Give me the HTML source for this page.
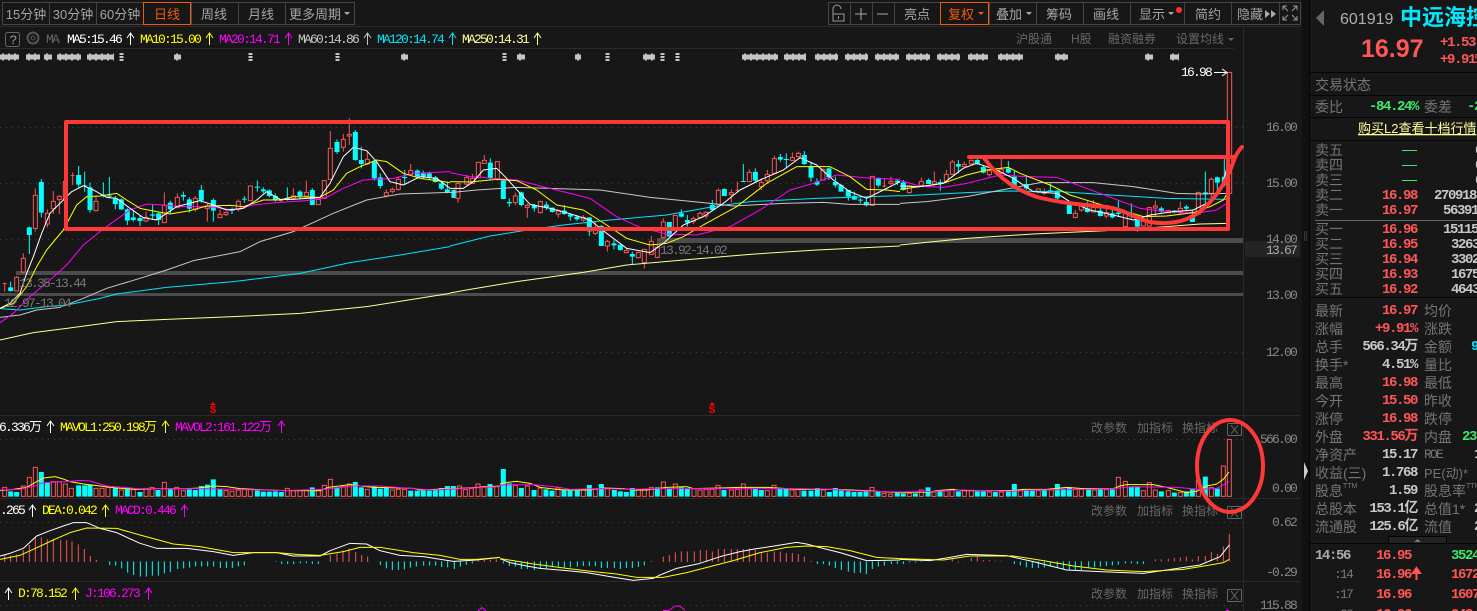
<!DOCTYPE html>
<html><head><meta charset="utf-8"><style>
html,body{margin:0;padding:0;background:#171717;width:1477px;height:611px;overflow:hidden}
svg{display:block}
text{font-family:"Liberation Sans","WenQuanYi Zen Hei","Noto Sans CJK SC",sans-serif}
.m{font-family:"Liberation Mono","WenQuanYi Zen Hei","Noto Sans CJK SC",monospace;font-size:13px;letter-spacing:-1.8px}
.t{font-size:13px;fill:#a5a5a5;text-anchor:middle}
.g{font-size:12px;fill:#686868}
.l{font-size:14px;fill:#757575}
.v{font-family:"Liberation Mono","WenQuanYi Zen Hei","Noto Sans CJK SC",monospace;font-size:14px;font-weight:bold;letter-spacing:-1.4px;text-anchor:end}
.s{font-family:"Liberation Mono","WenQuanYi Zen Hei","Noto Sans CJK SC",monospace;font-size:14px;font-weight:bold;letter-spacing:-1.4px}
.r{fill:#ff5656}.w{fill:#c8c8c8}.n{fill:#3fe86a}
.a{fill:#888;text-anchor:end}
.cy{stroke:#00ffff;fill:none}.rd{stroke:#f85656;fill:#171717;stroke-width:3}
.wk{stroke:#f85656;fill:none;stroke-width:3}
.ln{fill:none;stroke-width:3;stroke-linejoin:round}
</style></head><body>
<svg width="1477" height="611" viewBox="0 0 1477 611" xmlns="http://www.w3.org/2000/svg">
<rect width="1477" height="611" fill="#171717"/>

<!-- toolbar -->
<g fill="none" stroke="#454545" shape-rendering="crispEdges">
<rect x="2.500" y="2.500" width="352" height="22"/>
<path d="M49.500 2V24M96.500 2V24M143.500 2V24M191.500 2V24M238.500 2V24M285.500 2V24"/>
<rect x="828.500" y="2.500" width="472" height="22"/>
<path d="M850.500 2V24M872.500 2V24M894.500 2V24M989.500 2V24M1036.500 2V24M1083.500 2V24M1130.500 2V24M1184.500 2V24M1231.500 2V24M1279.500 2V24"/>
<rect x="143.500" y="2.500" width="47" height="22" stroke="#f25a0c"/>
<rect x="940.500" y="2.500" width="48" height="22" stroke="#f25a0c"/>
</g>
<text class="t" x="26" y="19">15分钟</text><text class="t" x="73" y="19">30分钟</text><text class="t" x="120" y="19">60分钟</text>
<text class="t" x="167" y="19" style="fill:#f25a0c">日线</text><text class="t" x="214" y="19">周线</text><text class="t" x="261" y="19">月线</text><text class="t" x="315" y="19">更多周期</text>
<path d="M344 12h6l-3 3z" fill="#aaa"/>
<path d="M833 14v-5a4 4 0 0 1 8 0M833 14h11v7h-11zM838.500 16v3" fill="none" stroke="#999"/>
<path d="M855 14h12M861 8v12M877 14h11" fill="none" stroke="#aaa"/>
<text class="t" x="917" y="19">亮点</text><text class="t" x="961" y="19" style="fill:#f25a0c">复权</text><path d="M978 12h6l-3 3z" fill="#f25a0c"/>
<text class="t" x="1009" y="19">叠加</text><path d="M1026 12h6l-3 3z" fill="#aaa"/>
<text class="t" x="1059" y="19">筹码</text><text class="t" x="1106" y="19">画线</text>
<text class="t" x="1152" y="19">显示</text><path d="M1168 12h6l-3 3z" fill="#aaa"/><circle cx="1179" cy="10" r="3" fill="#ff3030"/>
<text class="t" x="1208" y="19">简约</text><text class="t" x="1250" y="19">隐藏</text><path d="M1265 10l5 4-5 4zM1271 10l5 4-5 4z" fill="#aaa"/>
<path d="M1297 7l-5 5M1297 11v-4h-4M1283 21v-4M1283 21h4M1283 21l5-5M1297 17v4h-4M1297 21l-5-5M1283 7h4M1283 7v4M1283 7l5 5" fill="none" stroke="#999" transform="translate(0,-1)"/>

<!-- frame lines -->
<g stroke="#2a2a2a" shape-rendering="crispEdges" fill="none">
<path d="M0 26.500H1300M0 48.500H1234M0 415.500H1300M0 498.500H1300M0 581.500H1300"/>
<path d="M1243.500 27V611"/>
</g>
<g stroke="#424242" stroke-dasharray="1 5" shape-rendering="crispEdges" fill="none">
<path d="M0 127.500H1246M0 183.500H1246M0 239.500H1246M0 295.500H1246M0 352.500H1246M0 439.500H1246M0 522.500H1246M0 605.500H1246"/>
</g>

<!-- row 2 -->
<rect x="5.500" y="32.500" width="14" height="14" rx="2" fill="none" stroke="#666"/>
<text class="m" x="9.500" y="44" fill="#999">?</text>
<circle cx="33" cy="38" r="5.500" fill="none" stroke="#555" stroke-width="2"/><circle cx="33" cy="38" r="2" fill="none" stroke="#555"/>
<text class="m" x="46" y="43" fill="#666">MA</text>
<text class="m" x="67" y="43" fill="#fff">MA5:15.46</text>
<text class="m" x="140" y="43" fill="#ffff00">MA10:15.00</text>
<text class="m" x="219" y="43" fill="#ff00ff">MA20:14.71</text>
<text class="m" x="298" y="43" fill="#c8c8c8">MA60:14.86</text>
<text class="m" x="377" y="43" fill="#00e5ff">MA120:14.74</text>
<text class="m" x="462" y="43" fill="#ffff99">MA250:14.31</text>
<g fill="none">
<path d="M130.500 45V33M127 38l3.500-5 3.500 5" stroke="#fff"/>
<path d="M209.500 45V33M206 38l3.500-5 3.500 5" stroke="#ffff00"/>
<path d="M288.500 45V33M285 38l3.500-5 3.500 5" stroke="#ff00ff"/>
<path d="M367.500 45V33M364 38l3.500-5 3.500 5" stroke="#c8c8c8"/>
<path d="M452.500 45V33M449 38l3.500-5 3.500 5" stroke="#00e5ff"/>
<path d="M537.500 45V33M534 38l3.500-5 3.500 5" stroke="#ffff99"/>
</g>
<text class="g" x="1016" y="43">沪股通</text><text class="g" x="1071" y="43">H股</text><text class="g" x="1108" y="43">融资融券</text><text class="g" x="1176" y="43">设置均线</text><path d="M1228 38h6l-3 3z" fill="#666"/>

<!-- markers -->
<path d="M0 57H19M26 57H40M44 57H52M57 57H81M87 57H114M174 57H181M401 57H408M517 57H525M575 57H581M643 57H655M742 57H778M784 57H806M815 57H838M845 57H868M875 57H899M906 57H930M937 57H960M968 57H988M998 57H1023M1055 57H1068M1145 57H1153M1170 57H1179" stroke="#c4c4c4" stroke-width="5" fill="none"/>
<path d="M0 57H19M26 57H40M44 57H52M57 57H81M87 57H114M174 57H181M401 57H408M517 57H525M575 57H581M643 57H655M742 57H778M784 57H806M815 57H838M845 57H868M875 57H899M906 57H930M937 57H960M968 57H988M998 57H1023M1055 57H1068M1145 57H1153M1170 57H1179" stroke="#c4c4c4" stroke-width="7" stroke-dasharray="2 4" stroke-dashoffset="-2" fill="none"/>
<path d="M121.500 53V61M250.500 53V61M337.500 53V61M504.500 53V61M607.500 53V61M662.500 53V61M677.500 53V61" stroke="#c4c4c4" stroke-width="4" stroke-dasharray="2 1" fill="none"/>

<!-- gray range bars -->
<g fill="#4c4c4c" shape-rendering="crispEdges">
<rect x="657" y="238" width="586" height="5"/>
<rect x="16" y="271" width="1227" height="4"/>
<rect x="0" y="293" width="1243" height="3"/>
</g>

<!-- chart section 1 -->
<g transform="translate(0,110) scale(.33333)">
<path class="cy" stroke-width="3" d="M32 515V545M88 350V432M124 207V322M236 168V232M254 185V245M270 218V308M310 217V262M328 201V265M346 258V298M364 265V300M382 295V345M400 300V335M420 318V348M458 285V330M476 305V345M511 272V310M550 245V272M568 262V308M604 225V278M640 265V335M696 292V312M733 258V278M772 212V245M790 232V250M808 238V262M826 250V275M862 232V272M900 240V266M937 235V285M1011 88V132M1066 60V152M1084 110V175M1123 150V212M1141 190V236M1214 180V222M1252 178V205M1270 182V205M1288 185V210M1306 198V218M1324 212V240M1342 215V250"/>
<path class="cy" stroke-width="15" d="M32 532V543M88 352V375M124 216V308M236 195V224M254 226V229M270 232V300M310 254V257M328 257V260M346 266V282M364 268V298M382 298V332M400 322V330M420 324V333M458 313V317M476 310V330M511 278V298M550 255V260M568 268V296M604 240V272M640 270V302M696 300V303M733 266V269M772 230V233M790 238V244M808 241V258M826 258V270M862 264V270M900 245V258M937 240V285M1011 96V126M1066 66V150M1084 150V162M1123 155V205M1141 202V228M1214 201V204M1252 182V200M1270 190V200M1288 190V202M1306 202V216M1324 220V236M1342 238V248"/>
<path class="wk" d="M14 518V545M50 498V545M70 430V490M106 235V365M142 298V352M160 243V312M178 255V312M196 212V300M218 187V225M288 260V305M438 305V336M493 247V338M532 250V295M586 258V305M622 282V335M660 298V323M678 305V318M715 268V305M751 226V272M844 268V276M880 235V270M919 212V258M955 265V285M973 210V265M991 63V210M1030 72V125M1048 25V105M1102 125V165M1159 238V262M1177 232V250M1195 200V242M1232 162V195"/>
<path class="rd" d="M8 521h12M44 502h12v41h-12zM64 445h12v41h-12zM100 256h12v99h-12zM136 310h12v32h-12zM154 274h12v22h-12zM172 259h12v9h-12zM190 214h12v56h-12zM212 197h12M282 274h12v28h-12zM432 322h12v11h-12zM487 286h12v52h-12zM526 262h12v30h-12zM580 265h12v33h-12zM616 288h12v7h-12zM654 313h12v10h-12zM672 307h12v7h-12zM709 274h12v24h-12zM745 228h12v44h-12zM838 272h12M874 258h12v8h-12zM913 247h12v11h-12zM949 268h12v16h-12zM967 212h12v53h-12zM985 115h12v93h-12zM1024 88h12v24h-12zM1042 73h12v5h-12zM1096 148h12v14h-12zM1153 248h12v10h-12zM1171 238h12v6h-12zM1189 208h12v30h-12zM1226 182h12v12h-12z"/>
<g class="ln">
<polyline stroke="#ffff99" points="0,690 100,668 200,655 350,635 500,628 700,620 900,610 1100,590 1350,550"/>
<polyline stroke="#00e5ff" points="0,596 60,600 140,590 200,585 300,565 350,552 500,532 700,515 900,490 1050,458 1200,435 1350,410"/>
<polyline stroke="#c8c8c8" points="0,622 60,615 110,600 180,592 250,565 320,535 420,505 500,480 580,452 720,425 780,395 880,365 1000,310 1100,270 1200,252 1350,247"/>
<polyline stroke="#ff00ff" points="0,638 40,610 90,560 150,510 200,465 250,405 300,365 340,335 390,300 440,282 490,285 550,290 630,290 700,300 760,285 830,278 920,272 980,262 1030,235 1090,210 1180,205 1240,190 1350,185"/>
<polyline stroke="#ffff00" points="0,596 40,580 80,530 110,470 140,420 190,360 230,285 260,260 300,258 350,250 380,270 420,295 470,305 510,312 570,302 620,288 690,286 730,290 790,270 840,270 880,260 960,262 1000,240 1040,190 1080,170 1130,150 1160,155 1210,190 1260,205 1310,212 1350,218"/>
<polyline stroke="#ffffff" points="0,595 30,580 60,550 80,490 100,440 125,370 150,310 185,275 215,245 250,227 280,240 320,262 350,265 390,295 430,323 470,330 500,310 530,290 600,272 640,285 680,300 730,295 770,270 800,245 840,268 880,268 960,262 990,220 1030,140 1060,112 1100,122 1130,155 1170,215 1210,225 1260,200 1310,205 1350,235"/>
</g>
</g>

<!-- chart section 2 -->
<g transform="translate(450,110) scale(.33333)">
<path class="cy" stroke-width="3" d="M12 238V264M121 145V210M160 210V267M178 265V290M214 245V288M253 282V305M289 275V300M307 292V308M343 285V315M361 310V332M381 315V332M418 322V378M454 345V408M492 390V418M511 404V422M547 425V463M658 336V380M694 298V322M712 315V350M787 270V302M823 235V258M880 162V215M916 175V216M991 132V155M1009 130V175M1063 123V165M1083 155V215M1101 205V228M1137 172V210M1156 200V232M1173 222V245M1195 240V272M1213 245V270M1231 265V280M1249 260V290M1285 202V232M1342 208V225"/>
<path class="cy" stroke-width="15" d="M12 240V264M121 158V205M160 212V267M178 276V280M214 247V285M253 285V295M289 284V294M307 293V306M343 302V312M361 313V320M381 320V328M418 322V364M454 348V408M492 400V406M511 404V420M547 432V440M658 336V380M694 310V320M712 330V338M787 285V300M823 237V258M880 213V216M916 186V212M991 141V149M1009 147V150M1063 135V162M1083 168V203M1101 215V224M1137 175V202M1156 216V226M1173 225V245M1195 240V260M1213 258V269M1231 269V272M1249 276V286M1285 204V226M1342 212V218"/>
<path class="wk" d="M24 218V278M50 195V225M68 192V222M85 155V205M103 135V162M142 153V212M196 248V285M232 280V323M271 272V310M325 298V322M400 315V335M436 335V375M472 390V425M529 415V430M565 425V445M583 418V476M604 378V435M622 405V445M640 325V385M676 316V360M730 320V342M750 305V325M768 303V326M805 235V285M844 238V278M862 215V248M898 178V216M934 205V240M952 180V222M973 137V192M1027 127V152M1045 125V143M1119 175V212M1267 198V288M1303 205V232M1323 200V225"/>
<path class="rd" d="M18 220h12V265h-12zM44 203h12V222h-12zM62 205h12V220h-12zM79 157h12V203h-12zM97 151h12V160h-12zM136 155h12V207h-12zM190 258h12V278h-12zM226 286h12V292h-12zM265 275h12V308h-12zM319 303h12V312h-12zM394 322h12V330h-12zM430 360h12V370h-12zM466 394h12V408h-12zM523 421h12V428h-12zM559 428h12V443h-12zM577 418h12V458h-12zM598 394h12V433h-12zM616 412h12V442h-12zM634 336h12V382h-12zM670 316h12V358h-12zM724 326h12V334h-12zM744 310h12V322h-12zM762 307h12V318h-12zM799 241h12V283h-12zM838 248h12V254h-12zM856 241h12M892 187h12V215h-12zM928 218h12V230h-12zM946 193h12V212h-12zM967 146h12V190h-12zM1021 143h12V151h-12zM1039 130h12V140h-12zM1113 178h12V210h-12zM1261 199h12V286h-12zM1297 228h12M1317 214h12V220h-12z"/>
<g class="ln">
<polyline stroke="#ffff99" points="0,549 60,538 200,515 400,487 530,465 700,450 900,433 1100,420 1350,408"/>
<polyline stroke="#00e5ff" points="0,408 120,378 220,362 340,345 480,330 650,315 790,290 900,275 1100,265 1350,257"/>
<polyline stroke="#c8c8c8" points="0,248 80,240 200,232 300,235 450,240 600,262 760,278 850,288 1000,280 1120,277 1200,283 1350,283"/>
<polyline stroke="#ff00ff" points="0,188 60,200 200,210 300,235 420,265 500,320 570,352 650,372 740,375 840,350 930,300 1020,240 1090,220 1160,195 1240,203 1350,208"/>
<polyline stroke="#ffff00" points="0,215 60,216 140,208 200,212 260,240 320,285 400,300 470,345 530,385 600,405 650,400 700,380 760,345 860,290 950,220 1040,170 1140,170 1200,200 1250,238 1310,240 1350,245"/>
<polyline stroke="#ffffff" points="0,235 40,235 70,215 100,180 140,175 170,205 210,250 240,283 300,295 350,308 420,330 470,370 530,415 600,428 640,400 700,345 760,320 820,280 870,240 930,210 1000,180 1050,143 1100,165 1150,210 1200,245 1250,265 1300,240 1350,215"/>
</g>
</g>

<!-- chart section 3 -->
<g transform="translate(900,60) scale(.33333)">
<path class="cy" stroke-width="3" d="M10 360V392M86 355V372M121 358V392M175 300V340M232 295V315M250 315V340M325 303V340M343 330V388M379 350V390M451 370V395M472 390V425M508 425V462M562 425V458M601 440V470M637 445V475M655 422V470M694 430V475M712 470V515M784 440V458M823 450V460M859 435V450M877 448V486M916 335V430M952 350V395M973 295V380"/>
<path class="cy" stroke-width="15" d="M10 367V390M86 360V372M121 366V372M175 312V320M232 300V312M250 321V338M325 325V338M343 350V385M379 372V385M451 391V394M472 392V415M508 435V462M562 445V456M601 452V468M637 460V472M655 458V462M694 460V470M712 478V500M784 445V455M823 452V458M859 440V446M877 465V486M916 397V403M952 352V368M973 350V375"/>
<path class="wk" d="M28 375V402M64 353V380M103 335V378M139 330V370M157 300V345M193 305V325M214 298V315M268 330V350M304 295V340M415 385V400M433 385V405M526 450V475M544 430V455M580 420V456M619 445V475M676 452V500M730 480V500M748 440V500M766 422V470M805 450V460M841 425V462M895 395V465M934 352V430"/>
<path class="rd" d="M22 378h12V398h-12zM58 364h12V376h-12zM97 365h12V372h-12zM133 343h12V365h-12zM151 306h12V343h-12zM187 313h12V320h-12zM208 301h12V312h-12zM262 332h12V344h-12zM298 328h12V340h-12zM409 387h12V395h-12zM427 395h12V400h-12zM520 460h12V472h-12zM538 436h12V450h-12zM574 442h12V456h-12zM613 458h12V468h-12zM670 456h12V500h-12zM724 484h12V498h-12zM742 443h12V498h-12zM760 438h12V444h-12zM799 452h12V458h-12zM835 445h12V458h-12zM889 398h12V462h-12zM928 358h12V400h-12zM982 37h13V400h-13z"/>
<g class="ln">
<polyline stroke="#ffff99" points="0,555 200,535 400,522 620,512 800,500 900,492 985,490"/>
<polyline stroke="#00e5ff" points="0,408 200,398 330,393 480,395 630,405 800,415 985,418"/>
<polyline stroke="#c8c8c8" points="0,430 80,425 200,410 330,385 420,368 580,368 700,380 830,400 900,402 985,400"/>
<polyline stroke="#ff00ff" points="0,362 60,378 130,382 200,370 300,345 380,350 470,352 560,385 640,415 720,445 800,455 900,458 950,450 980,430"/>
<polyline stroke="#ffff00" points="0,388 60,380 130,370 200,345 260,330 325,322 360,340 450,375 510,405 590,430 680,455 730,470 800,468 880,458 930,440 970,420 985,395"/>
<polyline stroke="#ffffff" points="0,378 60,380 130,370 190,325 230,310 290,330 340,355 400,395 470,400 510,425 570,450 640,465 700,480 750,465 820,455 880,450 940,420 970,370 985,300"/>
</g>
</g>

<text class="m" x="19" y="287" fill="#777">13.35-13.44</text>
<text class="m" x="4" y="307" fill="#777">12.97-13.04</text>
<text class="m" x="660" y="254" fill="#777">13.92-14.02</text>
<text class="m" x="1181" y="76" fill="#fff">16.98</text>
<path d="M1214 72.500H1227M1222 69l5 3.500-5 3.500" fill="none" stroke="#fff"/>

<!-- S markers -->
<path d="M210 405l3-3 3 3zM709 405l3-3 3 3z" fill="#f00"/>
<text x="213" y="413" text-anchor="middle" style="font-family:'Liberation Mono',monospace;font-size:11px;font-weight:bold" fill="#f00">S</text>
<text x="712" y="413" text-anchor="middle" style="font-family:'Liberation Mono',monospace;font-size:11px;font-weight:bold" fill="#f00">S</text>

<!-- Volume + MACD section 1 -->
<g transform="translate(0,400) scale(.33333)">
<path class="cy" stroke-width="15" d="M32 274V290M50 276V290M124 216V290M142 248V290M236 256V290M254 256V290M270 254V290M346 264V290M382 262V290M420 276V290M474 270V290M511 268V290M568 268V290M586 270V290M604 258V290M622 254V290M640 238V290M660 266V290M772 272V290M790 275V290M808 275V290M826 274V290M844 276V290M937 262V290M1011 262V290M1066 246V290M1084 262V290M1123 258V290M1141 266V290M1159 264V290M1232 272V290M1252 272V290M1270 272V290M1288 272V290M1306 270V290M1324 264V290M1342 258V290M1360 258V290M1470 252V290"/>
<path class="rd" d="M8 262h12V289h-12zM64 258h12V289h-12zM82 232h12V289h-12zM100 202h12V289h-12zM154 245h12V289h-12zM172 245h12V289h-12zM190 252h12V289h-12zM208 265h12V289h-12zM282 265h12V289h-12zM300 265h12V289h-12zM318 262h12V289h-12zM358 270h12V289h-12zM394 268h12V289h-12zM432 265h12V289h-12zM450 262h12V289h-12zM487 247h12V289h-12zM524 262h12V289h-12zM544 272h12V289h-12zM672 272h12V289h-12zM690 274h12V289h-12zM709 270h12V289h-12zM727 268h12V289h-12zM745 268h12V289h-12zM856 265h12V289h-12zM874 272h12V289h-12zM894 272h12V289h-12zM913 272h12V289h-12zM949 272h12V289h-12zM967 256h12V289h-12zM985 238h12V289h-12zM1024 260h12V289h-12zM1042 252h12V289h-12zM1096 268h12V289h-12zM1171 270h12V289h-12zM1189 268h12V289h-12zM1208 268h12V289h-12zM1372 258h12V289h-12zM1390 268h12V289h-12zM1408 266h12V289h-12zM1428 252h12V289h-12zM1446 260h12V289h-12zM1484 260h12V289h-12z"/>
<g class="ln">
<polyline stroke="#ffff00" points="0,272 40,268 80,262 110,245 130,234 165,230 190,237 210,245 250,252 300,258 350,264 410,268 470,266 560,266 600,264 640,258 680,260 720,266 800,270 860,272 960,272 985,262 1050,254 1080,258 1120,262 1240,265 1260,270 1400,264 1500,258"/>
<polyline stroke="#ff00ff" points="0,270 60,268 110,256 130,248 200,245 240,241 270,243 320,258 410,266 500,266 600,266 700,268 850,272 970,268 1060,258 1140,258 1240,266 1300,270 1500,260"/>
</g>
<path class="wk" d="M14 464V486M32 466V486M50 464V486M70 450V486M88 435V486M106 412V486M124 412V486M142 418V486M160 416V486M182 420V486M200 420V486M216 424V486M235 433V486M253 447V486M271 468V486M289 480V486M1435 482V486M1453 480V486M1471 480V486M1489 478V486M991 465V486M1011 460V486M1029 452V486M1047 445V486M1067 456V486M1085 465V486M1103 470V486"/>
<path class="cy" stroke-width="3" d="M329 484V495M347 484V497M365 484V505M383 484V518M401 484V525M421 484V530M439 484V530M457 484V527M475 484V527M493 484V520M511 484V516M533 484V507M551 484V505M569 484V503M587 484V499M605 484V499M623 484V499M641 484V499M661 484V504M679 484V504M697 484V504M715 484V499M733 484V496M827 484V486M845 484V492M863 484V492M881 484V492M901 484V490M919 484V490M937 484V492M955 484V492M1141 484V495M1159 484V505M1177 484V510M1195 484V510M1213 484V508M1231 484V503M1249 484V500M1271 484V497M1289 484V497M1307 484V497M1325 484V501M1343 484V502M1363 484V507M1381 484V500M1399 484V495M1417 484V490"/>
<g class="ln">
<polyline stroke="#ffffff" points="0,468 30,460 70,445 110,408 150,392 190,378 220,368 260,368 300,385 350,398 420,430 470,445 560,445 640,455 700,466 760,458 830,458 880,468 960,468 990,452 1050,430 1100,432 1140,452 1200,466 1270,470 1360,484 1430,480 1500,472"/>
<polyline stroke="#ffff00" points="0,478 60,466 100,448 160,420 210,398 260,384 350,385 420,405 520,432 600,440 700,458 830,458 900,464 960,466 1030,455 1080,442 1140,442 1240,458 1320,466 1380,478 1430,478 1500,472"/>
</g>
</g>

<!-- Volume + MACD section 2 -->
<g transform="translate(500,400) scale(.33333)">
<path class="cy" stroke-width="15" d="M10 207V290M28 250V290M64 264V290M102 270V290M138 268V290M156 272V290M192 270V290M210 272V290M232 272V290M268 255V290M304 252V290M343 270V290M361 274V290M379 276V290M397 264V290M472 262V290M508 266V290M544 262V290M562 266V290M672 270V290M766 266V290M784 270V290M840 266V290M858 266V290M912 272V290M933 272V290M952 264V290M988 276V290M1006 264V290M1024 272V290M1044 274V290M1062 276V290M1080 276V290M1098 274V290M1134 274V290M1192 278V290"/>
<path class="rd" d="M40 256h12V289h-12zM76 258h12V289h-12zM114 264h12V289h-12zM168 264h12V289h-12zM244 270h12V289h-12zM280 268h12V289h-12zM316 266h12V289h-12zM409 270h12V289h-12zM427 270h12V289h-12zM448 262h12V289h-12zM484 246h12V289h-12zM520 252h12V289h-12zM576 266h12V289h-12zM594 270h12V289h-12zM612 268h12V289h-12zM630 268h12V289h-12zM648 256h12V289h-12zM688 270h12V289h-12zM706 268h12V289h-12zM724 252h12V289h-12zM742 266h12V289h-12zM796 272h12V289h-12zM816 256h12V289h-12zM870 270h12V289h-12zM888 268h12V289h-12zM964 270h12V289h-12zM1110 262h12V289h-12zM1146 280h12V289h-12zM1166 282h12V289h-12z"/>
<g class="ln">
<polyline stroke="#ffff00" points="0,252 20,247 50,244 90,250 120,262 170,268 200,270 260,270 310,264 370,266 400,270 440,270 500,262 560,260 580,266 660,264 720,262 800,262 900,268 1000,268 1100,272 1200,278"/>
<polyline stroke="#ff00ff" points="0,255 100,254 180,262 210,268 300,266 400,268 480,266 900,266 1000,268 1040,272 1200,276"/>
</g>
<path class="wk" d="M490 470V486M508 465V486M526 457V486M544 454V486M562 454V486M583 454V486M601 450V486M619 450V486M637 454V486M655 447V486M673 447V486M694 447V486M712 447V486M730 447V486M748 445V486M766 450V486M784 456V486M802 458V486M823 455V486M841 455V486M859 459V486M877 459V486M895 462V486M913 470V486M934 483V486"/>
<path class="cy" stroke-width="3" d="M10 484V490M28 484V498M46 484V500M64 484V507M82 484V507M103 484V510M121 484V505M139 484V505M157 484V502M175 484V500M193 484V502M211 484V502M232 484V500M250 484V498M268 484V498M286 484V498M304 484V504M322 484V504M343 484V504M361 484V507M379 484V504M397 484V504M415 484V501M433 484V496M454 484V486M952 484V492M970 484V492M988 484V497M1006 484V504M1024 484V510M1045 484V515M1063 484V519M1081 484V519M1099 484V522M1117 484V507M1135 484V500M1153 484V497M1174 484V492M1192 484V492"/>
<g class="ln">
<polyline stroke="#ffffff" points="0,476 30,488 80,498 120,505 200,512 260,518 330,530 400,541 460,535 480,525 530,505 600,490 660,470 720,455 770,446 830,437 890,427 920,432 960,443 1020,458 1060,470 1100,482 1200,480"/>
<polyline stroke="#ffff00" points="0,476 40,482 100,492 200,505 280,515 350,522 410,532 490,532 560,518 630,500 700,482 780,458 860,442 920,438 980,440 1050,452 1130,472 1200,476"/>
</g>
</g>

<!-- Volume + MACD section 3 -->
<g transform="translate(900,400) scale(.33333)">
<path class="cy" stroke-width="15" d="M10 280V290M46 280V290M84 262V290M120 272V290M175 274V290M232 274V290M250 274V290M286 276V290M325 274V290M343 252V290M379 272V290M397 272V290M433 268V290M472 252V290M490 266V290M508 262V290M566 268V290M601 268V290M637 268V290M694 260V290M712 260V290M784 274V290M823 278V290M859 274V290M877 268V290M916 230V290M952 266V290"/>
<path class="rd" d="M22 280h12V289h-12zM58 270h12V289h-12zM96 276h12V289h-12zM132 272h12V289h-12zM150 268h12V289h-12zM187 272h12V289h-12zM208 272h12V289h-12zM262 276h12V289h-12zM298 276h12V289h-12zM355 272h12V289h-12zM409 272h12V289h-12zM448 270h12V289h-12zM520 268h12V289h-12zM538 268h12V289h-12zM578 270h12V289h-12zM613 268h12V289h-12zM649 232h12V289h-12zM670 244h12V289h-12zM724 272h12V289h-12zM742 248h12V289h-12zM760 270h12V289h-12zM799 272h12V289h-12zM835 278h12V289h-12zM889 240h12V289h-12zM928 262h12V289h-12zM964 198h12V289h-12zM982 118h12V289h-12z"/>
<g class="ln">
<polyline stroke="#ffff00" points="0,278 90,276 110,272 160,268 190,272 260,272 340,272 370,268 440,268 500,262 550,266 640,266 660,258 680,254 760,254 800,262 830,270 860,278 890,274 920,258 950,252 970,238 987,216"/>
<polyline stroke="#ff00ff" points="0,276 100,274 180,270 260,272 330,274 400,270 560,268 640,266 700,260 830,262 900,268 950,265 970,255 987,244"/>
</g>
<path class="wk" d="M139 484V485M157 477V484M175 484V487M193 484V485M214 474V484M232 470V484M250 480V484M268 480V484M286 482V484M304 482V484M766 478V484M784 478V484M805 476V484M823 474V484M841 472V484M859 470V484M877 478V484M895 468V484M916 468V484M934 456V484M952 462V484M970 440V484M988 402V484"/>
<path class="cy" stroke-width="3" d="M10 484V492M28 484V487M46 484V487M64 484V486M343 484V492M361 484V496M379 484V502M397 484V504M415 484V504M433 484V503M451 484V500M472 484V504M490 484V507M508 484V510M526 484V510M544 484V510M566 484V502M584 484V502M601 484V500M619 484V498M637 484V496M655 484V494M676 484V490M694 484V490M712 484V492M730 484V492"/>
<g class="ln">
<polyline stroke="#ffffff" points="0,478 90,482 150,472 200,463 320,467 400,485 500,510 600,515 730,520 800,510 900,495 960,470 988,435"/>
<polyline stroke="#ffff00" points="0,476 130,480 210,468 340,468 430,482 520,498 620,510 730,515 850,508 930,495 970,488 988,478"/>
</g>
</g>

<!-- KDJ arcs -->
<path d="M663 610.500H669L675 606H680L685 610.500M478 611L482 607.500L486 611M1226 610.500H1229" fill="none" stroke="#ff00ff"/>

<!-- indicator labels -->
<text class="m" x="-1" y="431" fill="#fff">6.336万</text>
<path d="M50.500 433V421M47 426l3.500-5 3.500 5" stroke="#fff" fill="none"/>
<text class="m" x="60" y="431" fill="#ffff00">MAVOL1:250.198万</text>
<path d="M165.500 433V421M162 426l3.500-5 3.500 5" stroke="#ffff00" fill="none"/>
<text class="m" x="175" y="431" fill="#ff00ff">MAVOL2:161.122万</text>
<path d="M281.500 433V421M278 426l3.500-5 3.500 5" stroke="#ff00ff" fill="none"/>
<text class="m" x="0" y="514" fill="#fff">.265</text>
<path d="M32.500 517V505M29 510l3.500-5 3.500 5" stroke="#fff" fill="none"/>
<text class="m" x="42" y="514" fill="#ffff00">DEA:0.042</text>
<path d="M105.500 517V505M102 510l3.500-5 3.500 5" stroke="#ffff00" fill="none"/>
<text class="m" x="115" y="514" fill="#ff00ff">MACD:0.446</text>
<path d="M184.500 517V505M181 510l3.500-5 3.500 5" stroke="#ff00ff" fill="none"/>
<path d="M8.500 600V588M5 593l3.500-5 3.500 5" stroke="#fff" fill="none"/>
<text class="m" x="18" y="597" fill="#ffff00">D:78.152</text>
<path d="M75.500 600V588M72 593l3.500-5 3.500 5" stroke="#ffff00" fill="none"/>
<text class="m" x="85" y="597" fill="#ff00ff">J:106.273</text>
<path d="M148.500 600V588M145 593l3.500-5 3.500 5" stroke="#ff00ff" fill="none"/>

<text class="g" x="1091" y="432">改参数</text><text class="g" x="1137" y="432">加指标</text><text class="g" x="1182" y="432">换指标</text>
<text class="g" x="1091" y="515">改参数</text><text class="g" x="1137" y="515">加指标</text><text class="g" x="1182" y="515">换指标</text>
<text class="g" x="1091" y="598">改参数</text><text class="g" x="1137" y="598">加指标</text><text class="g" x="1182" y="598">换指标</text>
<g fill="none" stroke="#666">
<rect x="1227.500" y="423.500" width="14" height="12" rx="1"/><path d="M1231 425l7 9M1238 425l-7 9"/>
<rect x="1227.500" y="506.500" width="14" height="12" rx="1"/><path d="M1231 508l7 9M1238 508l-7 9"/>
<rect x="1227.500" y="589.500" width="14" height="12" rx="1"/><path d="M1231 591l7 9M1238 591l-7 9"/>
</g>

<!-- axis -->
<rect x="1245" y="241" width="55" height="16" rx="2" fill="#242424"/>
<text class="m a" x="1296" y="131">16.00</text>
<text class="m a" x="1296" y="187">15.00</text>
<text class="m a" x="1296" y="243">14.00</text>
<text class="m a" x="1296" y="254" style="fill:#aaa">13.67</text>
<text class="m a" x="1296" y="299">13.00</text>
<text class="m a" x="1296" y="356">12.00</text>
<text class="m a" x="1296" y="443">566.00</text>
<text class="m a" x="1296" y="492">0.00</text>
<text class="m a" x="1296" y="526">0.62</text>
<text class="m a" x="1296" y="576">-0.29</text>
<text class="m a" x="1296" y="609">115.88</text>

<!-- hand-drawn annotations -->
<g fill="none" stroke="#ff3838" stroke-linejoin="round" stroke-linecap="round">
<rect x="66" y="122" width="1162" height="107" stroke-width="4"/>
<path d="M969 157H1234" stroke-width="4"/>
<path d="M984 158C1000 180 1017 190 1037 197C1060 203 1085 205 1107 207C1125 210 1135 218 1150 222C1170 225 1190 222 1205 207C1218 195 1228 178 1234 160C1237 152 1240 149 1242 147" stroke-width="4"/>
<ellipse cx="1230" cy="466" rx="33" ry="46" stroke-width="4"/>
</g>

<!-- sidebar -->
<rect x="1302" y="0" width="8" height="611" fill="#101010"/>
<rect x="1309" y="0" width="1" height="611" fill="#050505"/>
<rect x="1310" y="0" width="167" height="611" fill="#171717"/>
<path d="M1304 232h3M1304 234h3M1304 236h3M1304 238h3M1304 240h3" stroke="#666" stroke-dasharray="1 1"/>
<path d="M1304 462L1308 471L1304 480z" fill="#ccc"/>
<path d="M1324 10L1316 18L1324 26z" fill="#666"/>
<text x="1340" y="24" style="font-size:16px" fill="#a8b0b8">601919</text>
<text x="1400" y="25" style="font-size:22px;font-weight:bold" fill="#00eaff">中远海控</text>
<text x="1361" y="57" style="font-size:25px;font-weight:bold" class="r">16.97</text>
<text class="s r" x="1440" y="46">+1.53</text>
<text class="s r" x="1440" y="63">+9.91%</text>

<g stroke="#050505" shape-rendering="crispEdges">
<path d="M1310 72.500H1477M1310 95.500H1477M1310 117.500H1477M1310 140.500H1477M1310 297.500H1477M1310 543.500H1477"/>
</g>
<path d="M1315 220.500H1477" stroke="#666" shape-rendering="crispEdges"/>
<text class="l" x="1315" y="90">交易状态</text>
<text class="l" x="1315" y="112">委比</text><text class="v n" x="1418" y="110">-84.24%</text>
<text class="l" x="1424" y="112">委差</text><text class="s n" x="1467" y="110">-2</text>
<text x="1358" y="133" style="font-size:13px;text-decoration:underline" fill="#ffff99">购买L2查看十档行情</text>

<text class="l" x="1315" y="155">卖五</text><text class="l" x="1315" y="170">卖四</text><text class="l" x="1315" y="185">卖三</text><text class="l" x="1315" y="200">卖二</text><text class="l" x="1315" y="215">卖一</text>
<text class="l" x="1315" y="234">买一</text><text class="l" x="1315" y="249">买二</text><text class="l" x="1315" y="264">买三</text><text class="l" x="1315" y="279">买四</text><text class="l" x="1315" y="294">买五</text>
<path d="M1402 150.500H1417M1402 165.500H1417M1402 180.500H1417" stroke="#3fe86a" shape-rendering="crispEdges"/>
<text class="s w" x="1475" y="154">0</text><text class="s w" x="1475" y="169">0</text><text class="s w" x="1475" y="184">0</text>
<text class="v r" x="1417" y="199">16.98</text><text class="v r" x="1417" y="214">16.97</text>
<text class="v r" x="1417" y="233">16.96</text><text class="v r" x="1417" y="248">16.95</text><text class="v r" x="1417" y="263">16.94</text><text class="v r" x="1417" y="278">16.93</text><text class="v r" x="1417" y="293">16.92</text>
<text class="s w" x="1434" y="199">270918</text><text class="s w" x="1443" y="214">56391</text>
<text class="s w" x="1443" y="233">15115</text><text class="s w" x="1451" y="248">3263</text><text class="s w" x="1451" y="263">3302</text><text class="s w" x="1451" y="278">1675</text><text class="s w" x="1451" y="293">4643</text>

<text class="l" x="1315" y="316">最新</text><text class="l" x="1424" y="316">均价</text><text class="v r" x="1417" y="314">16.97</text>
<text class="l" x="1315" y="334">涨幅</text><text class="l" x="1424" y="334">涨跌</text><text class="v r" x="1417" y="332">+9.91%</text>
<text class="l" x="1315" y="352">总手</text><text class="l" x="1424" y="352">金额</text><text class="v w" x="1417" y="350">566.34万</text><text class="s" x="1471" y="350" fill="#00eaff">9</text>
<text class="l" x="1315" y="370">换手*</text><text class="l" x="1424" y="370">量比</text><text class="v w" x="1417" y="368">4.51%</text>
<text class="l" x="1315" y="388">最高</text><text class="l" x="1424" y="388">最低</text><text class="v r" x="1417" y="386">16.98</text>
<text class="l" x="1315" y="406">今开</text><text class="l" x="1424" y="406">昨收</text><text class="v r" x="1417" y="404">15.50</text>
<text class="l" x="1315" y="424">涨停</text><text class="l" x="1424" y="424">跌停</text><text class="v r" x="1417" y="422">16.98</text>
<text class="l" x="1315" y="442">外盘</text><text class="l" x="1424" y="442">内盘</text><text class="v r" x="1417" y="440">331.56万</text><text class="s n" x="1462" y="440">23</text>
<text class="l" x="1315" y="460">净资产</text><text class="m" x="1424" y="458" fill="#757575">ROE</text><text class="v w" x="1417" y="458">15.17</text><text class="s w" x="1474" y="458">1</text>
<text class="l" x="1315" y="478">收益(三)</text><text class="l" x="1424" y="478" style="font-size:13px">PE(动)*</text><text class="v w" x="1417" y="476">1.768</text>
<text class="l" x="1315" y="496">股息</text><text x="1343" y="488" style="font-size:7px" fill="#777">TTM</text><text class="l" x="1424" y="496">股息率</text><text x="1466" y="488" style="font-size:7px" fill="#777">TTM</text><text class="v w" x="1417" y="494">1.59</text>
<text class="l" x="1315" y="514">总股本</text><text class="l" x="1424" y="514">总值1*</text><text class="v w" x="1417" y="512">153.1亿</text><text class="s w" x="1474" y="512">2</text>
<text class="l" x="1315" y="532">流通股</text><text class="l" x="1424" y="532">流值</text><text class="v w" x="1417" y="530">125.6亿</text><text class="s w" x="1474" y="530">2</text>

<rect x="1388.500" y="536.500" width="58" height="7" fill="#222" stroke="#050505"/>
<path d="M1414 542l3.500-3 3.500 3z" fill="#777"/>

<text class="s" x="1315" y="559" fill="#aaa">14:56</text><text class="v r" x="1411" y="559">16.95</text><text class="s n" x="1451" y="559">3524</text>
<text class="m" x="1334" y="578" fill="#777">:14</text><text class="v r" x="1411" y="578">16.96</text><text class="s r" x="1451" y="578">1672</text>
<path d="M1416.500 580V570M1413 573l3.500-5 3.500 5z" stroke="#ff5656" fill="#ff5656" stroke-width="2"/>
<text class="m" x="1334" y="598" fill="#777">:17</text><text class="v r" x="1411" y="598">16.96</text><text class="s r" x="1451" y="598">1607</text>
<text class="m" x="1334" y="618" fill="#777">:20</text><text class="v r" x="1411" y="618">16.96</text><text class="s r" x="1451" y="618">943</text>
</svg>
</body></html>
